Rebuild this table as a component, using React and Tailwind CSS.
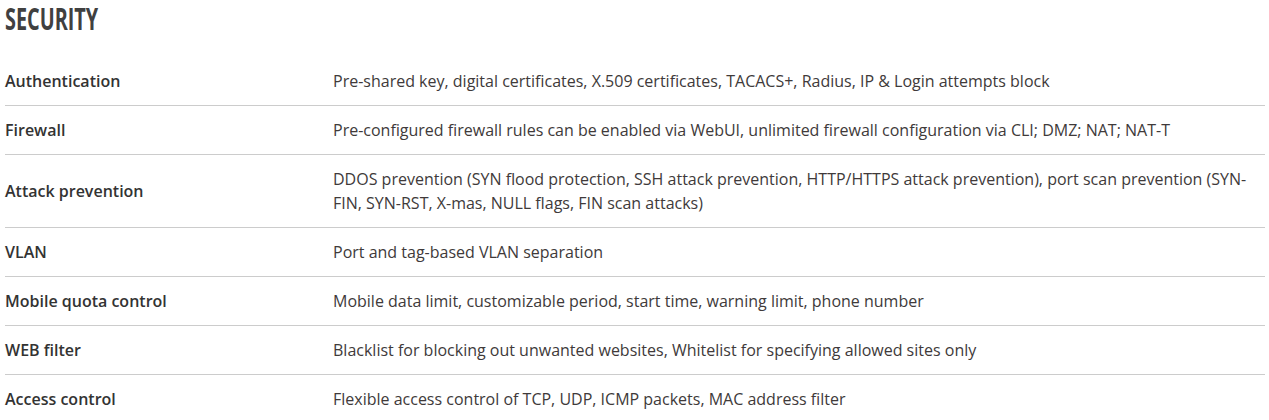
const rows = [
  { label: 'Authentication', value: 'Pre-shared key, digital certificates, X.509 certificates, TACACS+, Radius, IP & Login attempts block' },
  { label: 'Firewall', value: 'Pre-configured firewall rules can be enabled via WebUI, unlimited firewall configuration via CLI; DMZ; NAT; NAT-T' },
  { label: 'Attack prevention', value: 'DDOS prevention (SYN flood protection, SSH attack prevention, HTTP/HTTPS attack prevention), port scan prevention (SYN-FIN, SYN-RST, X-mas, NULL flags, FIN scan attacks)' },
  { label: 'VLAN', value: 'Port and tag-based VLAN separation' },
  { label: 'Mobile quota control', value: 'Mobile data limit, customizable period, start time, warning limit, phone number' },
  { label: 'WEB filter', value: 'Blacklist for blocking out unwanted websites, Whitelist for specifying allowed sites only' },
  { label: 'Access control', value: 'Flexible access control of TCP, UDP, ICMP packets, MAC address filter' },
];

export default function App() {
  return (
    <div className="bg-white min-h-screen pl-[5px] pr-[4px] font-['Open_Sans',sans-serif]">
      <h2 className="pt-[1px] h-[34px] w-[120px] text-[31px] leading-[34px] font-bold text-[#404040] whitespace-nowrap">
        <span className="inline-block origin-left scale-x-[0.64]">SECURITY</span>
      </h2>
      <div className="mt-[23px]">
        {rows.map((row, i) => (
          <div
            key={row.label}
            className={`flex items-center py-3 ${i < rows.length - 1 ? 'border-b border-[#cccccc]' : ''}`}
          >
            <div className="w-[328px] shrink-0 text-[16px] leading-6 font-semibold text-[#333333]">{row.label}</div>
            <div className="flex-1 pr-[12px] text-[16px] leading-6 text-[#403a3a]">{row.value}</div>
          </div>
        ))}
      </div>
    </div>
  );
}
